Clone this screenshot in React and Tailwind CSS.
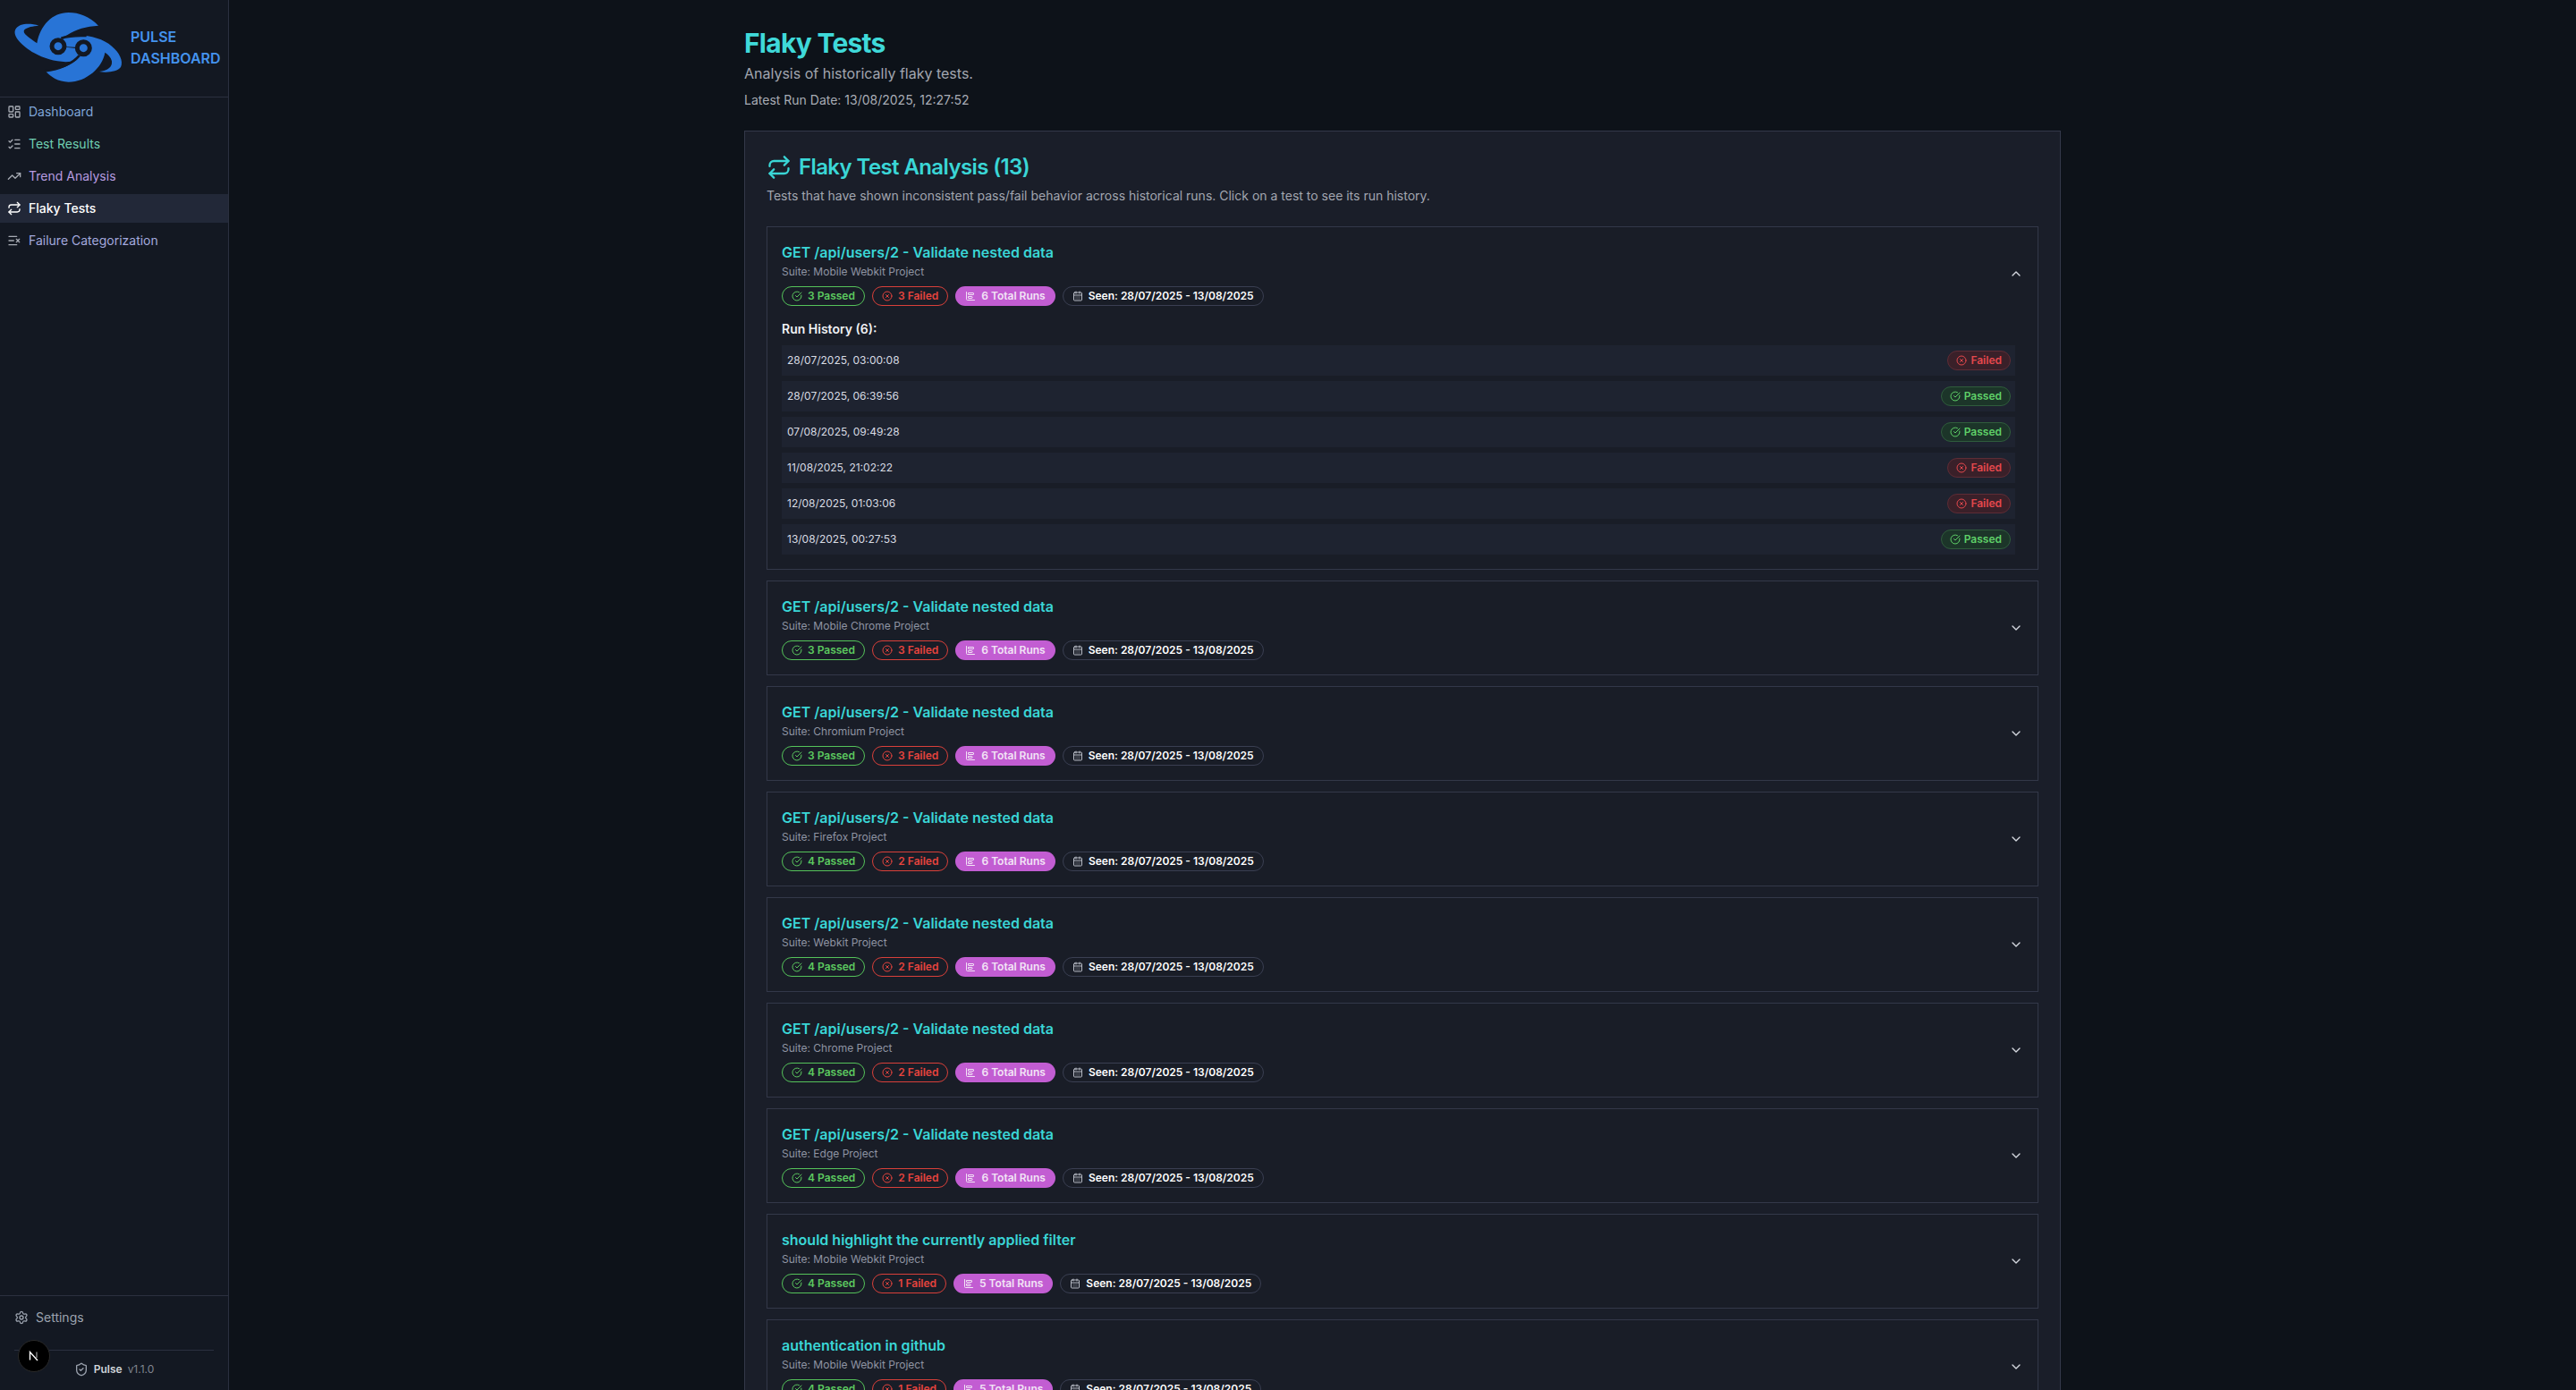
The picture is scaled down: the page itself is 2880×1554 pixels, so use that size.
import React from 'react';
import { LayoutDashboard, ListChecks, TrendingUp, Repeat, ListX, Settings, ShieldCheck, CircleCheckBig, CircleX, ChartBarBig, CalendarDays, ChevronDown, ChevronUp } from 'lucide-react';

const nav = [
  { label: 'Dashboard', Icon: LayoutDashboard, color: 'text-[#7fa6d8]' },
  { label: 'Test Results', Icon: ListChecks, color: 'text-[#6fcfb2]' },
  { label: 'Trend Analysis', Icon: TrendingUp, color: 'text-[#b79ce0]' },
  { label: 'Flaky Tests', Icon: Repeat, color: 'text-white font-medium', active: true },
  { label: 'Failure Categorization', Icon: ListX, color: 'text-[#a3a9de]' },
];

const runs = [
  ['28/07/2025, 03:00:08', false],
  ['28/07/2025, 06:39:56', true],
  ['07/08/2025, 09:49:28', true],
  ['11/08/2025, 21:02:22', false],
  ['12/08/2025, 01:03:06', false],
  ['13/08/2025, 00:27:53', true],
];

const tests = [
  { title: 'GET /api/users/2 - Validate nested data', suite: 'Mobile Webkit Project', passed: 3, failed: 3, total: 6, open: true },
  { title: 'GET /api/users/2 - Validate nested data', suite: 'Mobile Chrome Project', passed: 3, failed: 3, total: 6 },
  { title: 'GET /api/users/2 - Validate nested data', suite: 'Chromium Project', passed: 3, failed: 3, total: 6 },
  { title: 'GET /api/users/2 - Validate nested data', suite: 'Firefox Project', passed: 4, failed: 2, total: 6 },
  { title: 'GET /api/users/2 - Validate nested data', suite: 'Webkit Project', passed: 4, failed: 2, total: 6 },
  { title: 'GET /api/users/2 - Validate nested data', suite: 'Chrome Project', passed: 4, failed: 2, total: 6 },
  { title: 'GET /api/users/2 - Validate nested data', suite: 'Edge Project', passed: 4, failed: 2, total: 6 },
  { title: 'should highlight the currently applied filter', suite: 'Mobile Webkit Project', passed: 4, failed: 1, total: 5 },
  { title: 'authentication in github', suite: 'Mobile Webkit Project', passed: 4, failed: 1, total: 5 },
];

const Logo = () => (
  <svg width="140" height="100" viewBox="0 0 420 300" className="mb-2 shrink-0">
    <path fill="#2874d6" d="M330 86C300 55 265 42 230 42C175 42 135 85 124 145C100 128 72 112 82 100C92 90 110 88 130 86C100 77 64 78 52 98C40 120 75 155 115 178C150 198 200 212 240 206C258 202 270 190 280 165L195 155C205 135 212 127 225 118C255 98 290 88 330 86Z" />
    <path fill="#2874d6" d="M152 238C185 236 240 225 268 190L280 160L195 155C205 135 215 125 225 122C280 112 340 125 375 155C400 175 415 205 405 225C395 240 360 245 333 240C360 238 378 225 375 205C372 192 362 182 352 176C345 225 290 275 230 275C195 275 170 258 152 238Z" />
    <path fill="none" stroke="#131822" strokeWidth="8" d="M205 128C225 122 250 118 290 120M266 186C245 212 200 232 150 238" />
    <circle cx="195" cy="155" r="21" fill="#2874d6" stroke="#131822" strokeWidth="15" />
    <circle cx="280" cy="161" r="21" fill="#2874d6" stroke="#131822" strokeWidth="15" />
  </svg>
);

const Badge = ({ className, children }) => (
  <span className={`inline-flex items-center h-[22px] px-2.5 rounded-full border text-xs font-semibold whitespace-nowrap ${className}`}>
    {children}
  </span>
);

const StatusBadge = ({ passed }) => (
  <span className={`inline-flex items-center h-[22px] px-[9px] rounded-full border text-xs font-semibold ${passed ? 'bg-[#1c3529] border-[#2f5c3c] text-[#5fd068]' : 'bg-[#3a2029] border-[#5e2c35] text-[#e5484d]'}`}>
    {passed ? <CircleCheckBig size={12} className="mr-1" /> : <CircleX size={12} className="mr-1" />}
    {passed ? 'Passed' : 'Failed'}
  </span>
);

const TestCard = ({ test }) => (
  <div className="border border-[#333849] bg-[#191d27] p-4">
    <div className="flex items-center justify-between">
      <div>
        <h3 className="text-base font-semibold text-[#3ad6d6]">{test.title}</h3>
        <p className="mt-0.5 text-xs text-[#8f94a3]">Suite: {test.suite}</p>
        <div className="mt-2 flex items-center gap-2">
          <Badge className="border-[#55c35a] text-[#5cc95f]"><CircleCheckBig size={12} className="mr-1.5" />{test.passed} Passed</Badge>
          <Badge className="border-[#d9403a] text-[#e5443e]"><CircleX size={12} className="mr-1.5" />{test.failed} Failed</Badge>
          <Badge className="border-transparent bg-[#c25dd2] text-[#f2e4f6]"><ChartBarBig size={12} className="mr-1.5" />{test.total} Total Runs</Badge>
          <Badge className="border-[#3a3f52] text-white"><CalendarDays size={12} className="mr-1.5 text-[#b8bcc6]" />Seen: 28/07/2025 - 13/08/2025</Badge>
        </div>
      </div>
      {test.open ? <ChevronUp size={16} className="text-[#d5d8e0]" /> : <ChevronDown size={16} className="text-[#d5d8e0]" />}
    </div>
    {test.open && (
      <div className="mt-4 mr-[9px]">
        <h4 className="mb-2 text-sm font-semibold text-[#f0f1f4]">Run History ({runs.length}):</h4>
        <div className="flex flex-col gap-1.5">
          {runs.map(([date, passed]) => (
            <div key={date} className="flex items-center justify-between bg-[#1e2330] py-1.5 pl-1.5 pr-[5px]">
              <span className="text-xs text-[#d8dbe3]">{date}</span>
              <StatusBadge passed={passed} />
            </div>
          ))}
        </div>
      </div>
    )}
  </div>
);

export default function App() {
  return (
    <div className="flex h-screen overflow-hidden bg-[#0d1219] font-['Inter',sans-serif] text-white">
      <aside className="relative flex h-full w-[256px] shrink-0 flex-col border-r border-[#2b303f] bg-[#131822]">
        <div className="flex h-[109px] items-center border-b border-[#2b303f] pr-1">
          <Logo />
          <div className="mb-[2px] ml-1.5 text-base font-semibold leading-6 text-[#4493ee]">PULSE<br />DASHBOARD</div>
        </div>
        <nav className="flex flex-1 flex-col gap-1">
          {nav.map(({ label, Icon, color, active }) => (
            <div key={label} className={`flex h-8 items-center gap-2 px-2 text-sm ${active ? 'bg-[#222838]' : ''} ${color}`}>
              <Icon size={16} className={active ? 'text-white' : 'text-[#a6aab3]'} />
              {label}
            </div>
          ))}
        </nav>
        <div className="border-t border-[#2b303f] px-4 pt-[15px]">
          <div className="flex h-[18px] items-center gap-2 text-sm text-[#9ca3af]">
            <Settings size={16} />
            Settings
          </div>
          <div className="mt-[27px] flex h-[45px] items-center justify-center gap-1 border-t border-[#2b303f] pb-[3px] text-xs">
            <ShieldCheck size={16} className="text-[#9ca3af]" />
            <span className="ml-0.5 font-semibold text-[#d1d5db]">Pulse</span>
            <span className="ml-0.5 text-[#80858f]">v1.1.0</span>
          </div>
        </div>
        <div className="absolute left-[20px] top-[1498px] flex h-9 w-9 items-center justify-center rounded-full border border-[#2a2a2a] bg-black">
          <svg width="16" height="16" viewBox="0 0 16 16" fill="none">
            <path d="M3.5 12.5V3.5L12 13" stroke="white" strokeWidth="1.4" />
            <path d="M11 3.5V10" stroke="#9a9a9a" strokeWidth="1.2" />
          </svg>
        </div>
      </aside>
      <main className="flex-1 overflow-hidden">
        <div className="mx-auto w-[1472px] pt-[30px]">
          <h1 className="text-3xl font-bold tracking-tight text-[#3fd9d9]">Flaky Tests</h1>
          <p className="mt-1 text-base text-[#a2a6b0]">Analysis of historically flaky tests.</p>
          <p className="mt-2 text-sm text-[#a8acb5]">Latest Run Date: 13/08/2025, 12:27:52</p>
          <section className="mt-6 border border-[#333849] bg-[#1a1e29] p-6">
            <h2 className="flex items-center gap-2 text-2xl font-semibold tracking-tight text-[#3ad6d6]">
              <Repeat size={28} />
              Flaky Test Analysis (13)
            </h2>
            <p className="mt-1.5 text-sm text-[#a2a6b0]">Tests that have shown inconsistent pass/fail behavior across historical runs. Click on a test to see its run history.</p>
            <div className="mt-6 flex flex-col gap-3">
              {tests.map((t) => <TestCard key={t.suite + t.title} test={t} />)}
            </div>
          </section>
        </div>
      </main>
    </div>
  );
}
